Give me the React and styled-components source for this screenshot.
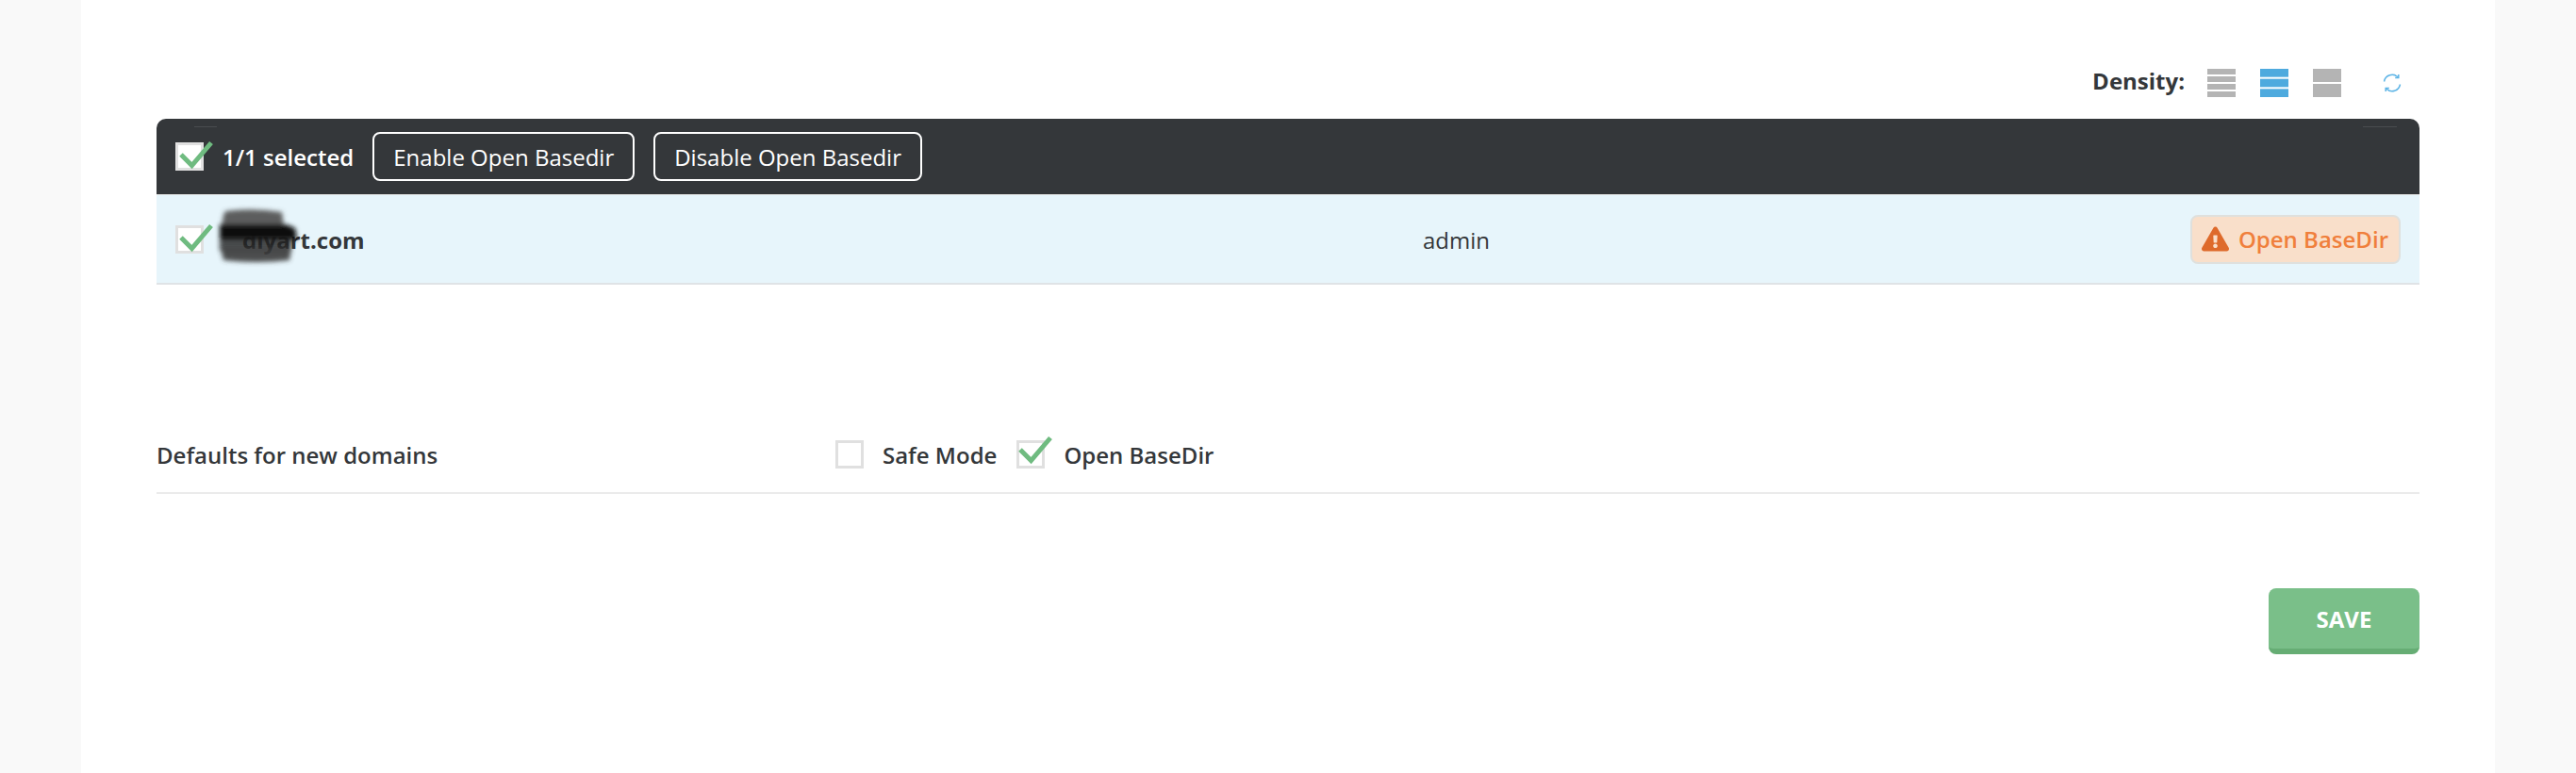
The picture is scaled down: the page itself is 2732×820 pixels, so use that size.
import styled, { createGlobalStyle } from 'styled-components';
import { FaExclamationTriangle } from 'react-icons/fa';

const GlobalStyle = createGlobalStyle`
  html, body {
    margin: 0;
    background: #f9f9f9;
    font-family: 'Open Sans', 'Noto Sans', sans-serif;
    color: #34373a;
  }
`;

const Panel = styled.main`
  margin: 0 86px;
  height: 820px;
  padding: 73px 80px 0;
  box-sizing: border-box;
  background: #fff;
`;

const Toolbar = styled.div`
  display: flex;
  align-items: center;
  justify-content: flex-end;
  height: 30px;
  padding-right: 19px;
`;

const DensityLabel = styled.span`
  margin: 0 24px 6px 0;
  font-size: 24px;
  font-weight: 700;
`;

const DensityIcon = styled.svg`
  display: block;
  width: 30px;
  height: 30px;
  margin-right: 26px;
  fill: ${(p) => (p.$active ? '#4eaade' : '#b4b4b4')};
`;

const RefreshIcon = styled.svg`
  display: block;
  width: 20px;
  height: 20px;
  margin-left: 18px;
  fill: none;
  stroke: #5db4e6;
  stroke-width: 1.5;
`;

const Table = styled.section`
  margin-top: 23px;
`;

const BulkBar = styled.div`
  position: relative;
  display: flex;
  align-items: center;
  height: 80px;
  padding: 0 20px;
  border-radius: 10px 10px 0 0;
  border-bottom: 1px solid #e0e0e0;
  background: #34373a;
  color: #fff;

  /* faint leftovers of the redaction along the top edge */
  &::before,
  &::after {
    content: '';
    position: absolute;
    top: 8px;
    height: 1px;
    background: #4a4d50;
  }
  &::before {
    left: 40px;
    width: 24px;
  }
  &::after {
    right: 24px;
    width: 36px;
  }
`;

const Box = styled.span`
  position: relative;
  display: block;
  flex: none;
  width: 30px;
  height: 30px;
  box-sizing: border-box;
  border: 3px solid #e0e0e0;
  background: #fff;
`;

const Tick = styled.svg`
  position: absolute;
  left: ${(p) => (p.$tight ? '-3px' : '-1px')};
  top: ${(p) => (p.$tight ? '-9px' : '-6px')};
  width: 40px;
  height: 30px;
  fill: none;
  stroke: #6fbb80;
  stroke-width: 5;
  overflow: visible;
`;

const SelectedCount = styled.span`
  margin: 0 20px;
  font-size: 24px;
  font-weight: 600;
`;

const BulkButton = styled.button`
  height: 52px;
  margin-right: 20px;
  padding: 0 20px;
  border: 2px solid #fff;
  border-radius: 8px;
  background: transparent;
  color: #fff;
  font: 400 24px 'Open Sans', sans-serif;
`;

const Row = styled.div`
  display: grid;
  grid-template-columns: 1323px 1fr auto;
  align-items: center;
  height: 93px;
  padding: 0 20px;
  border-bottom: 2px solid #dfe3e6;
  background: #e7f5fb;
`;

const DomainCell = styled.div`
  position: relative;
  display: flex;
  align-items: center;
`;

const DomainName = styled.span`
  margin: 2px 0 0 41px;
  font-size: 24px;
  font-weight: 700;
`;

const Scribble = styled.svg`
  position: absolute;
  left: 47px;
  top: -16px;
  width: 84px;
  height: 62px;
  overflow: visible;
`;

const Owner = styled.span`
  margin-top: 2px;
  font-size: 24px;
`;

const Badge = styled.span`
  display: flex;
  align-items: center;
  gap: 10px;
  height: 52px;
  padding: 0 11px 0 10px;
  box-sizing: border-box;
  border: 2px solid #dfe0dd;
  border-radius: 8px;
  background: #f9dfca;
  color: #f07f3c;
  font-size: 24px;
  font-weight: 600;
  svg {
    color: #de6a2b;
    font-size: 29px;
  }
`;

const DefaultsRow = styled.div`
  display: flex;
  align-items: center;
  height: 60px;
  margin-top: 150px;
  padding-bottom: 10px;
  border-bottom: 2px solid #ebebeb;
`;

const DefaultsLabel = styled.span`
  width: 720px;
  font-size: 24px;
  font-weight: 600;
`;

const Option = styled.label`
  display: flex;
  align-items: center;
  gap: 20px;
  margin-right: 21px;
  font-size: 24px;
  font-weight: 600;
`;

const Actions = styled.div`
  display: flex;
  justify-content: flex-end;
  margin-top: 100px;
`;

const SaveButton = styled.button`
  width: 160px;
  height: 70px;
  border: 0;
  border-bottom: 6px solid #66ad74;
  border-radius: 8px;
  background: #7abf89;
  color: #fff;
  font: 700 24px 'Open Sans', sans-serif;
`;

const Bars = ({ rows, active }) => {
  const gap = 2;
  const h = (30 - gap * (rows - 1)) / rows;
  return (
    <DensityIcon viewBox="0 0 30 30" $active={active}>
      {Array.from({ length: rows }, (_, i) => (
        <rect key={i} x="0" y={i * (h + gap)} width="30" height={h} />
      ))}
    </DensityIcon>
  );
};

const Check = ({ checked, tight }) => (
  <Box>
    {checked && (
      <Tick viewBox="0 0 40 30" $tight={tight}>
        <path d="M4 16L15.500 27.500L36 3.500" />
      </Tick>
    )}
  </Box>
);

const App = () => (
  <>
    <GlobalStyle />
    <Panel>
      <Toolbar>
        <DensityLabel>Density:</DensityLabel>
        <Bars rows={4} />
        <Bars rows={3} active />
        <Bars rows={2} />
        <RefreshIcon viewBox="0 0 20 20">
          <path d="M1.500 8.500A8.600 8.600 0 0 1 16 3.800" />
          <path d="M16.800 1v3.600h-3.600" />
          <path d="M18.500 11.500A8.600 8.600 0 0 1 4 16.200" />
          <path d="M3.200 19v-3.600h3.600" />
        </RefreshIcon>
      </Toolbar>
      <Table>
        <BulkBar>
          <Check checked />
          <SelectedCount>1/1 selected</SelectedCount>
          <BulkButton>Enable Open Basedir</BulkButton>
          <BulkButton>Disable Open Basedir</BulkButton>
        </BulkBar>
        <Row>
          <DomainCell>
            <Check checked />
            <DomainName>diyart.com</DomainName>
            <Scribble viewBox="0 0 84 62">
              <defs>
                <filter id="smudge" x="-20%" y="-20%" width="140%" height="140%">
                  <feGaussianBlur stdDeviation="2.500" />
                </filter>
              </defs>
              <g filter="url(#smudge)">
                <path d="M6 4Q36 0 66 5L68 20H2L4 8z" fill="#555" opacity="0.95" />
                <path d="M0 18H70L80 22L82 34H0z" fill="#0a0a0a" />
                <path d="M0 32H78L76 46H0z" fill="#222" opacity="0.8" />
                <path d="M1 44H76L74 56Q40 60 4 56z" fill="#3a3a3a" opacity="0.9" />
              </g>
            </Scribble>
          </DomainCell>
          <Owner>admin</Owner>
          <Badge>
            <FaExclamationTriangle />
            Open BaseDir
          </Badge>
        </Row>
      </Table>
      <DefaultsRow>
        <DefaultsLabel>Defaults for new domains</DefaultsLabel>
        <Option>
          <Check />
          Safe Mode
        </Option>
        <Option>
          <Check checked tight />
          Open BaseDir
        </Option>
      </DefaultsRow>
      <Actions>
        <SaveButton>SAVE</SaveButton>
      </Actions>
    </Panel>
  </>
);

export default App;
